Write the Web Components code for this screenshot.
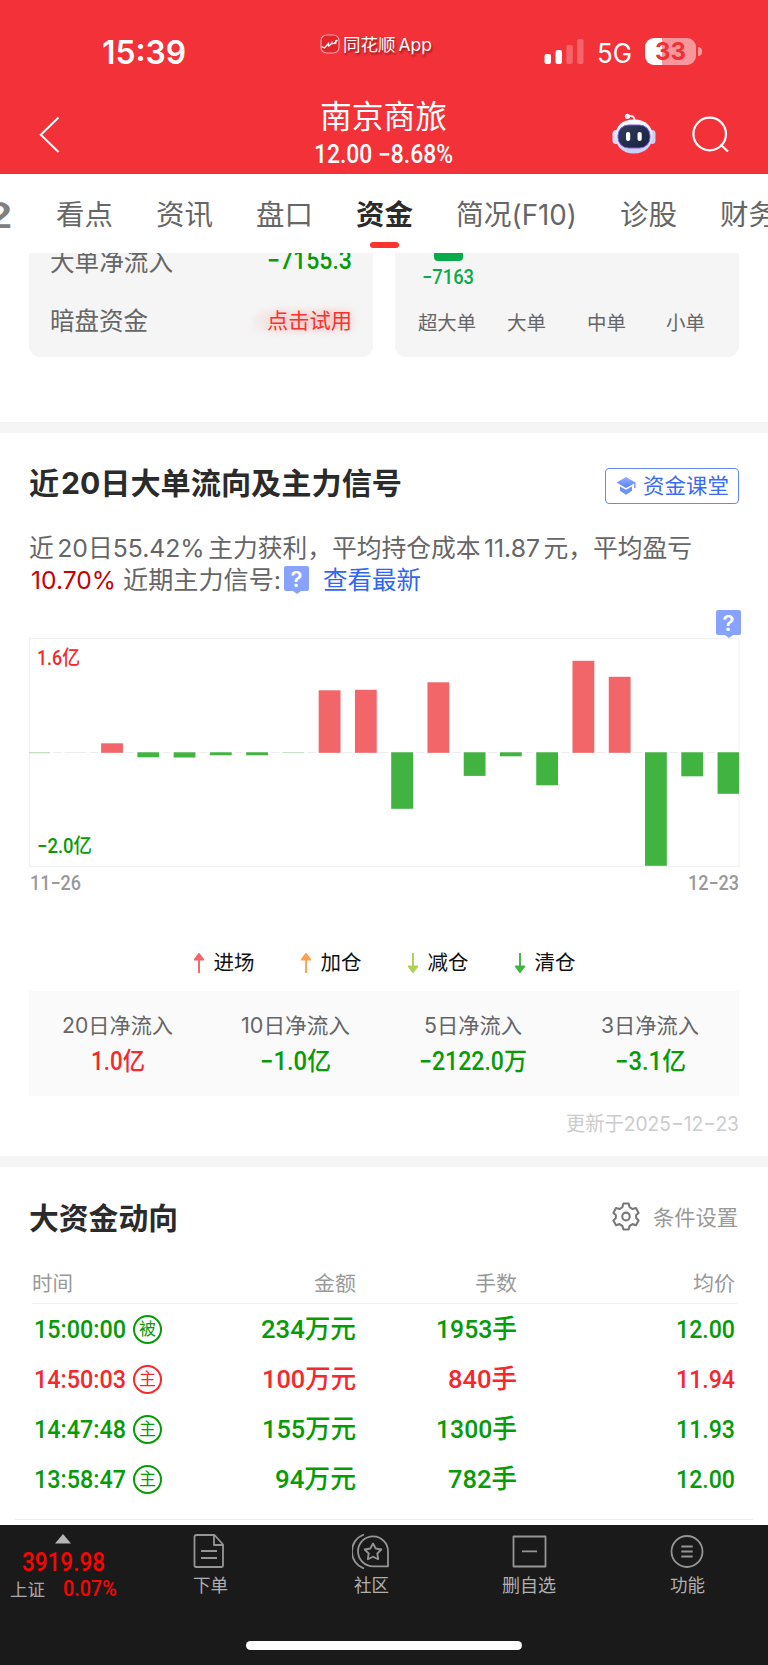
<!DOCTYPE html>
<html lang="zh-CN">
<head>
<meta charset="utf-8">
<title>南京商旅</title>
<style>
    body {
        margin: 0;
        width: 768px;
        height: 1665px;
        overflow: hidden;
        background: #fff;
        color: #666;
        font-family: Inter, "Noto Sans CJK SC", sans-serif;
        --din: Roboto, "Noto Sans CJK SC", sans-serif;
        --up: #f5282d;
        --down: #079b07;
    }
</style>
</head>
<body>
<stock-page></stock-page>

<script>
// Text squeezed or stretched to an exact width
class FitText extends HTMLElement {
    constructor() {
        super();
        this.attachShadow({ mode: 'open' });
        this.shadowRoot.innerHTML = `
        <style>
            :host { display: inline-block; white-space: nowrap; flex: none; text-align: left; }
            span { display: inline-block; transform-origin: 0 50%; }
        </style>
        <span><slot></slot></span>
        `;
    }

    connectedCallback() {
        const span = this.shadowRoot.querySelector('span');
        const width = Number(this.getAttribute('w'));
        const natural = span.getBoundingClientRect().width;
        this.style.width = width + 'px';
        span.style.transform = `scaleX(${width / natural})`;
    }
}

class StatusBar extends HTMLElement {
    constructor() {
        super();
        this.attachShadow({ mode: 'open' });
        this.shadowRoot.innerHTML = `
        <style>
            :host { display: flex; height: 88px; color: #fff; align-items: flex-start; }
            .time { margin: 32px 0 0 102px; font-weight: 600; font-size: 32px; line-height: 41px; }
            .app { display: flex; gap: 3px; margin: 34px 0 0 134px; font-size: 17px; line-height: 23px; text-shadow: 1px 2px 2px rgba(90,0,0,.6); word-spacing: -2px; }
            .signal { margin: 39px 0 0 112px; }
            .net { margin: 38px 0 0 13px; font-size: 26.5px; line-height: 31px; }
            .battery { width: 51px; height: 27px; margin: 38px 0 0 13px; border-radius: 9px; text-align: center;
                background: linear-gradient(90deg, #fff 0 33%, #f8979b 33%); color: #f22f37; font-weight: 700; font-size: 24.5px; line-height: 27px; }
            .nub { width: 4px; height: 9px; margin: 47px 0 0 2px; border-radius: 0 4px 4px 0; background: #f8979b; }
        </style>
        <fit-text w="84" class="time">15:39</fit-text>
        <div class="app">
            <svg width="20" height="20" viewBox="0 0 20 20">
                <rect x="1" y="1" width="18" height="18" rx="5.5" fill="#e0262c" stroke="#f6a0a3" stroke-width="1.2"/>
                <path d="M1.500 12.500l3 1.500 3-3.500 1.500 1.500 3-3 2 .5 3.500-3.500M8.500 8.500v4M12 7.500v3M15.800 6v4" fill="none" stroke="#fff" stroke-width="1.2"/>
            </svg>
            <fit-text w="89">同花顺 App</fit-text>
        </div>
        <svg class="signal" width="40" height="26" viewBox="0 0 40 26" fill="#fff">
            <rect x="0.500" y="15" width="6.500" height="10" rx="2"/>
            <rect x="11.500" y="11" width="6.500" height="14" rx="2"/>
            <rect x="22.300" y="6" width="6.500" height="19" rx="2" opacity=".25"/>
            <rect x="33" y="0" width="6.500" height="25" rx="2" opacity=".25"/>
        </svg>
        <fit-text w="35" class="net">5G</fit-text>
        <div class="battery"><fit-text w="31">33</fit-text></div>
        <div class="nub"></div>
        `;
    }
}

class StockHeader extends HTMLElement {
    constructor() {
        super();
        this.attachShadow({ mode: 'open' });
        this.shadowRoot.innerHTML = `
        <style>
            :host { display: flex; height: 86px; color: #fff; align-items: flex-start; }
            .back { margin: 28px 0 0 38px; }
            .name { width: 140px; margin: 9px 0 0 251px; text-align: center; }
            h1 { margin: 0 0 3px; font-weight: 400; font-size: 31.5px; line-height: 40px; }
            .quote { font: 500 25px/30px var(--din); }
            .robot { margin: 25px 0 0 159px; }
            .search { margin: 27px 0 0 35px; }
        </style>
        <svg class="back" width="24" height="38" viewBox="0 0 24 38"><path d="M20.500 1.500L2.800 18.700 20.500 36" fill="none" stroke="#fff" stroke-width="2"/></svg>
        <div class="name">
            <h1><fit-text w="127">南京商旅</fit-text></h1>
            <div class="quote"><fit-text w="139">12.00 −8.68%</fit-text></div>
        </div>
        <svg class="robot" width="44" height="42" viewBox="0 0 44 42">
            <defs>
                <linearGradient id="shell" x2="0" y2="1"><stop offset="0" stop-color="#fff"/><stop offset="1" stop-color="#c9cdf5"/></linearGradient>
                <linearGradient id="face" x2="1" y2="1"><stop offset="0" stop-color="#333e5c"/><stop offset="1" stop-color="#17203f"/></linearGradient>
            </defs>
            <path d="M16 3.500c4-1.500 6.500 0 6.500 4" fill="none" stroke="#e9e9fb" stroke-width="2"/>
            <circle cx="15.500" cy="3.300" r="2.600" fill="#f3f1fb"/>
            <rect x="0.500" y="17" width="7" height="14" rx="3.500" fill="#dcdff6"/>
            <rect x="36.500" y="17" width="7" height="14" rx="3.500" fill="#ccd0f2"/>
            <path d="M22 6.500c12 0 18.500 7 18.500 16.500S34 40.500 22 40.500 3.500 33 3.500 23 10 6.500 22 6.500z" fill="url(#shell)"/>
            <rect x="6" y="12" width="32" height="23" rx="10.500" fill="url(#face)" stroke="#7b5ff0" stroke-width="1"/>
            <rect x="14" y="19" width="4.200" height="9" rx="2" fill="#fff"/>
            <rect x="25.500" y="19" width="4.200" height="9" rx="2" fill="#fff"/>
        </svg>
        <svg class="search" width="40" height="40" viewBox="0 0 40 40" fill="none" stroke="#fff" stroke-width="2.200"><circle cx="18.700" cy="19" r="16.300"/><path d="M29.500 29.500l7.500 7"/></svg>
        `;
    }
}

class TabStrip extends HTMLElement {
    constructor() {
        super();
        this.attachShadow({ mode: 'open' });
        this.shadowRoot.innerHTML = `
        <style>
            :host { display: flex; gap: 43px; height: 79px; overflow: hidden; font-size: 28px; line-height: 38px; }
            .tab { display: flex; flex-direction: column; align-items: center; padding-top: 22px; flex: none; }
            .cut { margin-left: -16px; color: #808080; font-weight: 600; font-size: 35px; }
            .active { color: #2b2b2b; font-weight: 700; }
            .active::after { content: ""; width: 29px; height: 6px; margin-top: 8px; border-radius: 3px; background: #fb352e; }
        </style>
        <div class="tab cut"><fit-text w="29">2</fit-text></div>
        <div class="tab"><fit-text w="57">看点</fit-text></div>
        <div class="tab"><fit-text w="57">资讯</fit-text></div>
        <div class="tab"><fit-text w="57">盘口</fit-text></div>
        <div class="tab active"><fit-text w="57">资金</fit-text></div>
        <div class="tab"><fit-text w="121">简况(F10)</fit-text></div>
        <div class="tab"><fit-text w="57">诊股</fit-text></div>
        <div class="tab"><fit-text w="57">财务</fit-text></div>
        `;
    }
}

class FlowCards extends HTMLElement {
    constructor() {
        super();
        this.attachShadow({ mode: 'open' });
        this.shadowRoot.innerHTML = `
        <style>
            :host { display: flex; gap: 22px; height: 104px; padding: 0 29px 65px; }
            .card { box-sizing: border-box; width: 344px; height: 104px; overflow: hidden; border-radius: 0 0 11px 11px; background: #f5f5f5; }
            .left { padding: 0 21px; }
            .row { display: flex; justify-content: space-between; align-items: center; height: 60px; font-size: 24.5px; }
            .row:first-child { height: 40px; margin: -13px 0 9px; }
            .num { color: var(--down); font: 500 25px/30px var(--din); margin-top: 2px; }
            .try { color: #f5322d; font-size: 21px; text-shadow: 0 0 9px rgba(245,50,45,.4), -15px 0 7px rgba(245,50,45,.16); }
            .bar { width: 29px; height: 8px; margin-left: 39px; border-radius: 0 0 4px 4px; background: #07ab4b; }
            .value { margin: 3px 0 0 27px; color: #07ab4b; font: 500 20px/26px var(--din); }
            .labels { display: flex; margin: 20px 0 0 23px; font-size: 19px; line-height: 28px; }
            .labels fit-text:nth-child(2) { margin-left: 31px; }
            .labels fit-text:nth-child(3) { margin-left: 41px; }
            .labels fit-text:nth-child(4) { margin-left: 40px; }
        </style>
        <div class="card left">
            <div class="row"><fit-text w="123">大单净流入</fit-text><fit-text w="85" class="num">−7155.3</fit-text></div>
            <div class="row"><fit-text w="98">暗盘资金</fit-text><fit-text w="85" class="try">点击试用</fit-text></div>
        </div>
        <div class="card">
            <div class="bar"></div>
            <div class="value"><fit-text w="52">−7163</fit-text></div>
            <div class="labels">
                <fit-text w="58">超大单</fit-text><fit-text w="39">大单</fit-text><fit-text w="39">中单</fit-text><fit-text w="39">小单</fit-text>
            </div>
        </div>
        `;
    }
}

class SectionBand extends HTMLElement {
    constructor() {
        super();
        this.attachShadow({ mode: 'open' });
        this.shadowRoot.innerHTML = `<style>:host { display: block; height: 11px; background: #f5f5f5; }</style>`;
    }
}

class HelpBadge extends HTMLElement {
    constructor() {
        super();
        this.attachShadow({ mode: 'open' });
        this.shadowRoot.innerHTML = `
        <style>
            :host { display: flex; flex-direction: column; align-items: center; width: 25px; height: 28px; }
            b { width: 25px; height: 25px; border-radius: 2px; background: #87a2ff; color: #fff; font: 600 22px/26px Inter, sans-serif; text-align: center; }
            i { border: 4px solid transparent; border-top: 3px solid #87a2ff; border-bottom: 0; }
        </style>
        <b>?</b><i></i>
        `;
    }
}

class FlowIntro extends HTMLElement {
    constructor() {
        super();
        this.attachShadow({ mode: 'open' });
        this.shadowRoot.innerHTML = `
        <style>
            :host { display: block; box-sizing: border-box; height: 177px; padding: 27px 29px 0; }
            .head { display: flex; justify-content: space-between; align-items: center; height: 45px; }
            h2 { margin: 0; color: #2b2b2b; font-size: 30px; line-height: 44px; font-weight: 700; word-spacing: -.18em; }
            .lesson { display: flex; align-items: center; gap: 7px; box-sizing: border-box; width: 134px; height: 36px; margin-top: 7px; padding-left: 10px;
                border: 1.5px solid #6389fb; border-radius: 4px; color: #3b6bf5; font-size: 21px; line-height: 30px; }
            .line { display: flex; align-items: center; height: 32px; font-size: 24.5px; line-height: 32px; word-spacing: -.14em; }
            .first { margin-top: 27px; }
            .second { padding-left: 2px; }
            .rate { color: #c80000; margin-right: 7px; }
            help-badge { margin: -1px 14px 0 3px; }
            .link { color: #2f66f5; }
        </style>
        <div class="head">
            <h2><fit-text w="373">近 20日大单流向及主力信号</fit-text></h2>
            <div class="lesson">
                <svg width="20" height="20" viewBox="0 0 20 20">
                    <defs><linearGradient id="cap" x2="0" y2="1"><stop offset="0" stop-color="#94b0ff"/><stop offset="1" stop-color="#5681f6"/></linearGradient></defs>
                    <path d="M10 1L19.500 6.500V12h-1.300V7.500L10 12 .5 6.500z" fill="url(#cap)"/>
                    <path d="M4 10.500l6 3.300 6-3.300v4.300L10 18.800l-6-4z" fill="#6c91fa"/>
                </svg>
                <fit-text w="86">资金课堂</fit-text>
            </div>
        </div>
        <div class="line first"><fit-text w="663">近 20日55.42% 主力获利，平均持仓成本 11.87 元，平均盈亏</fit-text></div>
        <div class="line second">
            <fit-text w="85" class="rate">10.70%</fit-text><fit-text w="158">近期主力信号:</fit-text>
            <help-badge></help-badge>
            <fit-text w="98" class="link">查看最新</fit-text>
        </div>
        `;
    }
}

// Signed bar heights in px, measured from the zero line
const FLOW_DAYS = [-1, 0, 9.5, -5, -5.2, -3, -3, -0.6, 62.5, 63, -56.5, 70.5, -23.6, -4, -33, 92, 76, -113.500, -24, -41.500];

class FlowChart extends HTMLElement {
    constructor() {
        super();
        this.attachShadow({ mode: 'open' });
        this.shadowRoot.innerHTML = `
        <style>
            :host { display: block; height: 381px; padding: 0 28px 0 29px; font-family: var(--din); }
            .tip { display: flex; justify-content: flex-end; height: 28px; }
            .tip help-badge { margin-right: -1px; }
            .plot { display: grid; height: 229px; }
            .plot > * { grid-area: 1 / 1; }
            .scale { display: flex; flex-direction: column; justify-content: space-between; padding: 8px 8px 9px; font-size: 20px; line-height: 24px; font-weight: 500; }
            .max { color: var(--up); }
            .min { color: var(--down); }
            .dates { display: flex; justify-content: space-between; padding: 3px 1px 5px; color: #999; font-size: 20px; line-height: 26px; font-weight: 500; }
            .legend { display: flex; justify-content: center; gap: 46px; margin-top: 41px; color: #111; font: 20.5px/42px Inter, "Noto Sans CJK SC", sans-serif; }
            .legend div { display: flex; align-items: center; gap: 10px; }
        </style>
        <div class="tip"><help-badge></help-badge></div>
        <div class="plot">
            <svg width="711" height="229" viewBox="0 0 711 229"></svg>
            <div class="scale"><fit-text w="43" class="max">1.6亿</fit-text><fit-text w="55" class="min">−2.0亿</fit-text></div>
        </div>
        <div class="dates"><fit-text w="51">11−26</fit-text><fit-text w="51">12−23</fit-text></div>
        <div class="legend"></div>
        `;
        this._drawBars();
        this._drawLegend();
    }

    _drawBars() {
        const zero = 114.800;
        let shapes = `
            <rect x=".5" y=".5" width="709.500" height="228" fill="none" stroke="#f0f0f0"/>
            <path d="M1 ${zero - .3}H709" stroke="#ededed" stroke-width="1"/>`;
        FLOW_DAYS.forEach((value, i) => {
            const x = i ? 36.260 * i - 0.400 : 0;
            const width = i ? Math.min(21.800, 710 - x) : 21;
            const y = value > 0 ? zero - value : zero - 0.500;
            // short white gaps in the zero line on both sides of a bar
            shapes += `<path d="M${x - 3} ${zero - .3}h3M${x + width} ${zero - .3}h3" stroke="#fff" stroke-width="1.500"/>
            <rect x="${x}" y="${y}" width="${width}" height="${Math.abs(value)}" fill="${value > 0 ? '#f26568' : '#41b341'}" opacity="${Math.abs(value) > 1 ? 1 : .35}"/>`;
        });
        this.shadowRoot.querySelector('.plot svg').innerHTML = shapes;
    }

    _drawLegend() {
        const up = 'M5 20V5M5 1L.8 6.500h8.400z';
        const down = 'M5 0V15M5 19L.8 13.500h8.400z';
        const items = [['进场', '#f26568', up], ['加仓', '#ffa04d', up], ['减仓', '#aed154', down], ['清仓', '#41b341', down]];
        this.shadowRoot.querySelector('.legend').innerHTML = items.map(([name, color, path]) => `
            <div><svg width="10" height="20" viewBox="0 0 10 20"><path d="${path}" fill="${color}" stroke="${color}" stroke-width="1.900"/></svg><fit-text w="41">${name}</fit-text></div>`).join('');
    }
}

class FlowSummary extends HTMLElement {
    constructor() {
        super();
        this.attachShadow({ mode: 'open' });
        this.shadowRoot.innerHTML = `
        <style>
            :host { display: block; height: 165px; padding: 0 29px; }
            .box { display: grid; grid-template-columns: repeat(4, 1fr); height: 105px; background: #fafafa; }
            .box div { display: flex; flex-direction: column; align-items: center; padding-top: 19px; font-size: 21px; line-height: 32px; }
            .box b { margin-top: 2px; font: 500 25px/35px var(--din); }
            .up { color: var(--up); }
            .down { color: var(--down); }
            .date { display: flex; justify-content: flex-end; margin-top: 12px; color: #ccc; font-size: 20px; line-height: 32px; }
        </style>
        <div class="box">
            <div><fit-text w="111">20日净流入</fit-text><b class="up"><fit-text w="54">1.0亿</fit-text></b></div>
            <div><fit-text w="109">10日净流入</fit-text><b class="down"><fit-text w="71">−1.0亿</fit-text></b></div>
            <div><fit-text w="98">5日净流入</fit-text><b class="down"><fit-text w="108">−2122.0万</fit-text></b></div>
            <div><fit-text w="98">3日净流入</fit-text><b class="down"><fit-text w="71">−3.1亿</fit-text></b></div>
        </div>
        <div class="date"><fit-text w="173">更新于2025−12−23</fit-text></div>
        `;
    }
}

const DEALS = [
    ['15:00:00', '被', '234万元', 95, '1953手', 81, '12.00', 'down'],
    ['14:50:03', '主', '100万元', 94, '840手', 69, '11.94', 'up'],
    ['14:47:48', '主', '155万元', 94, '1300手', 81, '11.93', 'down'],
    ['13:58:47', '主', '94万元', 81, '782手', 69, '12.00', 'down']
];

class DealTable extends HTMLElement {
    constructor() {
        super();
        this.attachShadow({ mode: 'open' });
        this.shadowRoot.innerHTML = `
        <style>
            :host { display: block; height: 358px; }
            .head { display: flex; align-items: center; height: 98px; padding: 0 30px 0 29px; }
            h2 { flex: 1; margin: 0; color: #2b2b2b; font-size: 30px; font-weight: 700; }
            .set { display: flex; align-items: center; gap: 13px; color: #999; font-size: 21px; }
            .cols { display: grid; grid-template-columns: 134px 190px 161px 218px; margin: 0 32px; align-items: center; }
            .cols > :not(:first-child) { justify-self: end; }
            .names { height: 35px; border-bottom: 1px solid #f0f0f0; margin: -1px 31px 0 32px; padding-bottom: 4px; color: #999; font-size: 20.5px; }
            .deal { height: 50px; font: 500 26.5px/36px var(--din); }
            .up { color: var(--up); }
            .down { color: var(--down); }
            .time { display: flex; align-items: center; gap: 7px; padding-left: 2px; }
            .kind { box-sizing: border-box; width: 29px; height: 29px; border: 2px solid; border-radius: 50%; font-size: 17px; line-height: 25px; text-align: center; font-weight: 400; }
            .end { height: 1px; margin: 15px 15px 0; background: #ededed; }
        </style>
        <div class="head">
            <h2><fit-text w="149">大资金动向</fit-text></h2>
            <div class="set">
                <svg width="28" height="29" viewBox="0 0 30 30" preserveAspectRatio="none" fill="none" stroke="#777" stroke-width="2.200" stroke-linejoin="round">
                    <path d="M12.200 1.500h5.600l1 3.700 3.200 2.100 3.700-1.100 2.800 5.100-2.600 2.200v3l2.600 2.700-2.800 4.800-3.700-1.100-3.200 1.900-1 3.700h-5.600l-1-3.700L8 22.900l-3.700 1.100-2.800-4.800L4.100 16.500v-3l-2.600-2.200 2.800-5.100L8 7.300l3.200-2.100z"/>
                    <circle cx="15" cy="15" r="4"/>
                </svg>
                <fit-text w="85">条件设置</fit-text>
            </div>
        </div>
        <div class="cols names"><fit-text w="41">时间</fit-text><fit-text w="42">金额</fit-text><fit-text w="42">手数</fit-text><fit-text w="42">均价</fit-text></div>
        ${DEALS.map(([time, kind, sum, sumWidth, hands, handsWidth, price, dir]) => `
        <div class="cols deal ${dir}">
            <div class="time"><fit-text w="92">${time}</fit-text><span class="kind">${kind}</span></div>
            <fit-text w="${sumWidth}">${sum}</fit-text><fit-text w="${handsWidth}">${hands}</fit-text><fit-text w="59">${price}</fit-text>
        </div>`).join('')}
        <div class="end"></div>
        `;
    }
}

class NavItem extends HTMLElement {
    constructor() {
        super();
        this.attachShadow({ mode: 'open' });
        this.shadowRoot.innerHTML = `
        <style>
            :host { display: flex; flex-direction: column; align-items: center; width: 80px; flex: none; padding-top: 8px; color: #b0b0b0; font-size: 18px; line-height: 28px; }
            ::slotted(svg) { height: 36px; margin-bottom: 3px; fill: none; stroke: #959595; stroke-width: 1.8px; stroke-linejoin: round; }
        </style>
        <slot name="icon"></slot>
        <slot></slot>
        `;
    }
}

class BottomNav extends HTMLElement {
    constructor() {
        super();
        this.attachShadow({ mode: 'open' });
        this.shadowRoot.innerHTML = `
        <style>
            :host { display: flex; flex-direction: column; align-items: center; height: 140px; background: #1a1a1a; }
            .items { display: flex; width: 768px; height: 116px; }
            .index { box-sizing: border-box; width: 125px; color: #fa0404; font-family: var(--din); font-weight: 500; padding-top: 9px; }
            .index svg { display: block; margin-left: 54px; }
            .point { margin: 4px 0 0 22px; font-size: 25.5px; line-height: 28px; }
            .rate { display: flex; gap: 18px; margin-left: 10px; font-size: 22px; line-height: 25px; }
            .rate fit-text:first-child { color: #aaa; font: 17.5px/28px Inter, "Noto Sans CJK SC", sans-serif; }
            nav-item:nth-of-type(1) { margin-left: 45px; }
            nav-item:nth-of-type(2) { margin-left: 81px; }
            nav-item:nth-of-type(3) { margin-left: 78px; }
            nav-item:nth-of-type(4) { margin-left: 78px; }
            .home { width: 276px; height: 9px; border-radius: 5px; background: #fff; }
        </style>
        <div class="items">
            <div class="index">
                <svg width="18" height="10"><path d="M9 0l8 9.500H1z" fill="#b5b5b5"/></svg>
                <div class="point"><fit-text w="83">3919.98</fit-text></div>
                <div class="rate"><fit-text w="35">上证</fit-text><fit-text w="54">0.07%</fit-text></div>
            </div>
            <nav-item>
                <svg slot="icon" width="36" height="36"><path d="M4.500 2H22.500l8.500 9.500V32.500q0 1.500-1.500 1.500H4Q2.500 34 2.500 32.500V4q0-2 2-2zM22 2v10h8.500M9 18h16M9 25h16"/></svg>
                <fit-text w="35">下单</fit-text>
            </nav-item>
            <nav-item>
                <svg slot="icon" width="38" height="36"><path d="M36 33.300H21A15 15 0 1 1 36 18.500zM12 1.500A18 18 0 0 0 12 35.500M21 10.500l2.700 5 5.600 1-4 4 .9 5.700-5.200-2.500-5.200 2.500.9-5.700-4-4 5.600-1z"/></svg>
                <fit-text w="35">社区</fit-text>
            </nav-item>
            <nav-item>
                <svg slot="icon" width="36" height="36"><path d="M2.500 3.500h32v30h-32zM11 18.300h15"/></svg>
                <fit-text w="54">删自选</fit-text>
            </nav-item>
            <nav-item>
                <svg slot="icon" width="36" height="36"><circle cx="18" cy="18.500" r="15.500"/><path d="M12.300 13.500h11.400M12.300 18.500h11.400M12.300 23.500h11.400"/></svg>
                <fit-text w="35">功能</fit-text>
            </nav-item>
        </div>
        <div class="home"></div>
        `;
    }
}

class StockPage extends HTMLElement {
    constructor() {
        super();
        this.attachShadow({ mode: 'open' });
        this.shadowRoot.innerHTML = `
        <style>
            :host { display: flex; flex-direction: column; width: 768px; }
            :host > * { flex: none; }
            .top { background: #f23138; }
        </style>
        <div class="top">
            <status-bar></status-bar>
            <stock-header></stock-header>
        </div>
        <tab-strip></tab-strip>
        <flow-cards></flow-cards>
        <section-band></section-band>
        <flow-intro></flow-intro>
        <flow-chart></flow-chart>
        <flow-summary></flow-summary>
        <section-band></section-band>
        <deal-table></deal-table>
        <bottom-nav></bottom-nav>
        `;
    }
}

customElements.define('stock-page', StockPage);
customElements.define('status-bar', StatusBar);
customElements.define('stock-header', StockHeader);
customElements.define('tab-strip', TabStrip);
customElements.define('flow-cards', FlowCards);
customElements.define('section-band', SectionBand);
customElements.define('help-badge', HelpBadge);
customElements.define('flow-intro', FlowIntro);
customElements.define('flow-chart', FlowChart);
customElements.define('flow-summary', FlowSummary);
customElements.define('deal-table', DealTable);
customElements.define('nav-item', NavItem);
customElements.define('bottom-nav', BottomNav);
// last, so that every text is measured inside its finished layout
customElements.define('fit-text', FitText);
</script>
</body>
</html>
